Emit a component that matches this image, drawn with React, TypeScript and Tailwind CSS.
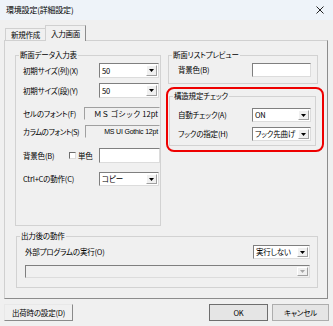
import { ReactNode } from "react";

function Arrow({ disabled = false }: { disabled?: boolean }) {
  return (
    <svg width="5" height="3" viewBox="0 0 5 3">
      <path d="M0 0h5L2.5 3z" fill={disabled ? "#a6a6a6" : "#000"} />
    </svg>
  );
}

function Combo({
  value,
  className = "",
  disabled = false,
}: {
  value?: string;
  className?: string;
  disabled?: boolean;
}) {
  return (
    <div
      className={`flex border border-t-[#7f7f7f] border-l-[#7f7f7f] border-r-[#dcdcdc] border-b-[#dcdcdc] ${
        disabled ? "bg-[#f0f0f0]" : "bg-white"
      } ${className}`}
    >
      <span className="flex min-w-0 flex-1 items-center overflow-hidden whitespace-nowrap pl-[2px]">
        {value}
      </span>
      <span className="my-[1px] mr-[1px] flex w-[11px] shrink-0 items-center justify-center border border-white border-r-[#a0a0a0] border-b-[#a0a0a0] bg-[#f0f0f0]">
        <Arrow disabled={disabled} />
      </span>
    </div>
  );
}

function Field({ className = "" }: { className?: string }) {
  return (
    <div
      className={`border border-t-[#7f7f7f] border-l-[#7f7f7f] border-r-[#dcdcdc] border-b-[#dcdcdc] bg-white ${className}`}
    />
  );
}

function Group({
  title,
  className = "",
  children,
}: {
  title: string;
  className?: string;
  children: ReactNode;
}) {
  return (
    <fieldset className={`border border-[#d2d2d2] ${className}`}>
      <legend className="ml-[3px] px-[1px] leading-[10px]">{title}</legend>
      {children}
    </fieldset>
  );
}

export default function App() {
  return (
    <div className="flex h-[326px] w-[333px] flex-col overflow-hidden whitespace-nowrap bg-[#f0f0f0] font-['Noto_Sans_CJK_JP',sans-serif] text-[7.5px] leading-none tracking-[-0.2px] text-black [font-feature-settings:'palt']">
      {/* title bar */}
      <div className="flex h-[20px] items-center justify-between bg-[#eef3f9] pl-[6px] pr-[9px]">
        <span className="text-[8px]">環境設定(詳細設定)</span>
        <svg width="8" height="8" viewBox="0 0 8 8">
          <path d="M0.5 0.5l7 7M7.5 0.5l-7 7" stroke="#222" strokeWidth="1" />
        </svg>
      </div>

      <div className="flex flex-col px-[4px] pt-[5px]">
        {/* tabs */}
        <div className="flex h-[15px] items-end pl-[1px]">
          <div className="flex h-[12px] w-[40px] items-center justify-center border-l border-t border-[#d0d0d0]">
            新規作成
          </div>
          <div className="relative z-10 -mb-px flex h-[16px] w-[41px] items-center justify-center border-l border-t border-r border-[#d0d0d0] border-r-[#8c8c8c] bg-[#f0f0f0]">
            入力画面
          </div>
        </div>

        {/* tab panel */}
        <div className="flex h-[259px] w-[324px] flex-col border border-[#d0d0d0] border-r-[#8c8c8c] border-b-[#8c8c8c] pl-[10px] pr-[9px] pt-[9px]">
          <div className="flex gap-[7px]">
            <Group title="断面データ入力表" className="h-[176px] w-[146px]">
              <div className="mt-[3px] flex h-[15px] items-center pl-[7px] pr-[1px]">
                <span>初期サイズ(列)(X)</span>
                <Combo value="50" className="ml-auto h-[15px] w-[60px]" />
              </div>
              <div className="mt-[5px] flex h-[15px] items-center pl-[7px] pr-[1px]">
                <span>初期サイズ(段)(Y)</span>
                <Combo value="50" className="ml-auto h-[15px] w-[60px]" />
              </div>
              <div className="mt-[9px] flex h-[13px] items-center pl-[7px]">
                <span>セルのフォント(F)</span>
                <div className="ml-auto flex h-[13px] w-[76px] items-center justify-end border border-t-[#a0a0a0] border-l-[#a0a0a0] border-r-[#f0f0f0] border-b-[#f0f0f0] pr-[1px] tracking-normal [font-feature-settings:normal]">
                  ＭＳ ゴシック 12pt
                </div>
              </div>
              <div className="mt-[5px] flex h-[13px] items-center pl-[7px]">
                <span className="tracking-[-0.5px]">カラムのフォント(S)</span>
                <div className="ml-auto flex h-[13px] w-[75px] shrink-0 items-center justify-end border border-t-[#a0a0a0] border-l-[#a0a0a0] border-r-[#f0f0f0] border-b-[#f0f0f0] pr-[1px] font-['Liberation_Sans',sans-serif] text-[7px] tracking-[-0.2px]">
                  MS UI Gothic 12pt
                </div>
              </div>
              <div className="mt-[10px] flex h-[15px] items-center pl-[7px]">
                <span className="w-[46px]">背景色(B)</span>
                <span className="h-[7px] w-[7px] border border-t-[#6d6d6d] border-l-[#6d6d6d] border-r-[#dcdcdc] border-b-[#dcdcdc] bg-white" />
                <span className="ml-[2px]">単色</span>
                <Field className="ml-auto h-[15px] w-[61px]" />
              </div>
              <div className="mt-[9px] flex h-[14px] items-center pl-[7px] pr-[1px]">
                <span>Ctrl+Cの動作(C)</span>
                <Combo value="コピー" className="ml-auto h-[14px] w-[60px]" />
              </div>
            </Group>

            <div className="flex w-[150px] flex-col">
              <Group title="断面リストプレビュー" className="h-[34px]">
                <div className="mt-[3px] flex h-[14px] items-center pl-[9px] pr-[6px]">
                  <span>背景色(B)</span>
                  <Field className="ml-auto h-[14px] w-[59px]" />
                </div>
              </Group>

              <div className="-ml-[2px] -mr-[6px] mt-[3px] rounded-[8px] border-2 border-[#ee0000] pb-[4px] pl-[1px] pr-[6px] pt-[2px]">
                <Group title="構造規定チェック" className="h-[55px]">
                  <div className="mt-[7px] flex h-[14px] items-center pl-[8px] pr-[4px]">
                    <span>自動チェック(A)</span>
                    <Combo value="ON" className="ml-auto h-[14px] w-[59px]" />
                  </div>
                  <div className="mt-[5px] flex h-[14px] items-center pl-[8px] pr-[4px]">
                    <span>フックの指定(H)</span>
                    <Combo value="フック先曲げ" className="ml-auto h-[14px] w-[59px]" />
                  </div>
                </Group>
              </div>
            </div>
          </div>

          <Group title="出力後の動作" className="ml-[1px] mt-[5px] h-[57px] w-[302px]">
            <div className="mt-[4px] flex h-[14px] items-center pl-[8px] pr-[7px]">
              <span>外部プログラムの実行(O)</span>
              <Combo value="実行しない" className="ml-auto h-[14px] w-[57px]" />
            </div>
            <div className="mt-[6px] pl-[8px] pr-[7px]">
              <Combo disabled className="h-[13px] w-full" />
            </div>
          </Group>
        </div>

        {/* buttons */}
        <div className="mt-[5px] flex h-[17px] items-stretch">
          <button className="w-[69px] border border-[#e8e8e8] border-r-[#8a8a8a] border-b-[#8a8a8a] bg-[#f0f0f0]">
            出荷時の設定(D)
          </button>
          <button className="ml-auto w-[59px] border border-[#6e6e6e] bg-[#e5e5e5]">
            OK
          </button>
          <button className="ml-[4px] w-[57px] border border-[#adadad] bg-[#e5e5e5]">
            キャンセル
          </button>
        </div>
      </div>
    </div>
  );
}
